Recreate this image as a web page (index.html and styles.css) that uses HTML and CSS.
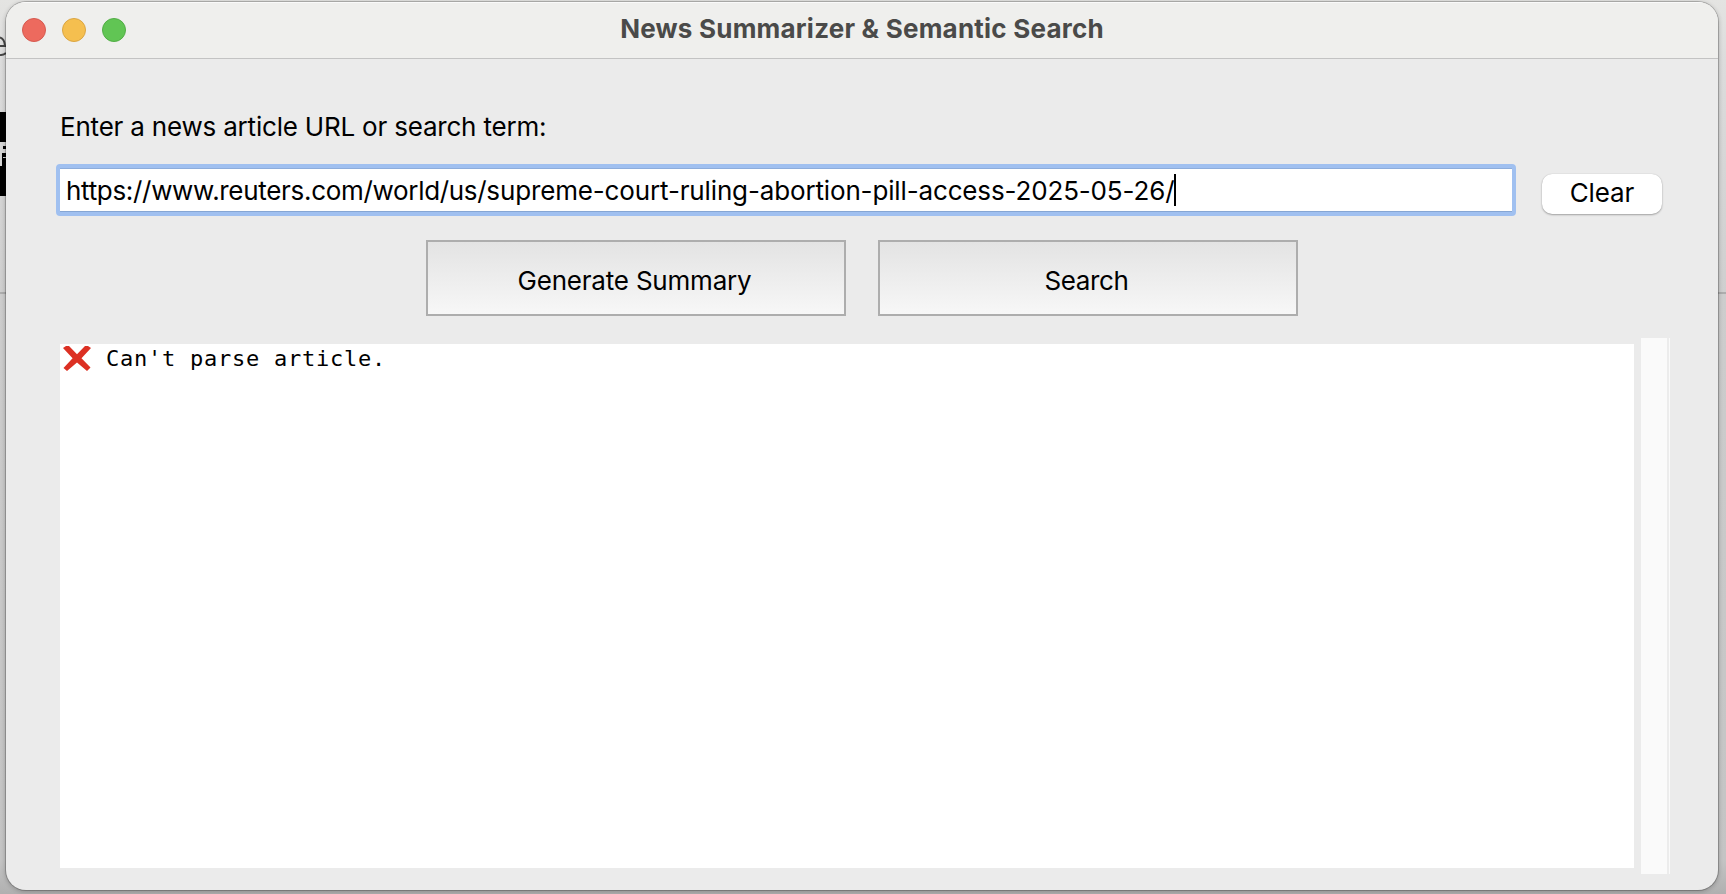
FILE: index.html
```html
<!DOCTYPE html>
<html lang="en">
<head>
<meta charset="utf-8">
<title>News Summarizer &amp; Semantic Search</title>
<link rel="stylesheet" href="styles.css">
</head>
<body>
<div class="desktop">
  <svg class="behind" width="6" height="300" viewBox="0 0 6 300" aria-hidden="true">
    <path d="M0 37.5Q4.6 39 5 46H0M0 55Q3.5 55.5 6 53" fill="none" stroke="#444" stroke-width="2"/>
    <path d="M0 112h6v84H0z" fill="#000"/>
    <path d="M0 142h6v4H3v3h3v4H2v13H0z" fill="#d6d6d6"/>
    <path d="M3 157h3v1H3z" fill="#d6d6d6"/>
  </svg>
  <main class="window">
    <header class="titlebar">
      <div class="lights">
        <span class="light close"></span>
        <span class="light minimize"></span>
        <span class="light expand"></span>
      </div>
      <h1 class="title"><span>News Summarizer &amp; Semantic Search</span></h1>
    </header>
    <section class="content">
      <div class="label"><span>Enter a news article URL or search term:</span></div>
      <div class="entry-row">
        <div class="entry"><span class="url"><span class="host">https://www.reuters.com/world/us/</span>supreme-court-ruling-abortion-pill-access-2025-05-26/</span><i class="caret"></i></div>
        <button class="clear"><span>Clear</span></button>
      </div>
      <div class="actions">
        <button class="action"><span class="generate">Generate Summary</span></button>
        <button class="action"><span class="search">Search</span></button>
      </div>
      <div class="result-row">
        <div class="result">
          <svg class="cross" width="28" height="25" viewBox="0 0 28 25" aria-hidden="true"><path d="M0 2L3 0h3l8 8.2L22 0h3l3 2-9.5 10.3L27.5 21.5 24 25 14 16.4 4 25 .5 22l9.1-9.7z" fill="#dc3023"/></svg>
          <span class="message">Can't parse article.</span>
        </div>
        <div class="scrollbar"></div>
      </div>
    </section>
  </main>
</div>
</body>
</html>
```
FILE: styles.css
```css
* { box-sizing: border-box; }
body { margin: 0; font-family: Inter, "Liberation Sans", sans-serif; color: #000; }
.desktop {
  position: relative;
  width: 1726px;
  height: 894px;
  padding: 2px 8px 4px 6px;
  overflow: hidden;
  background: linear-gradient(#e4e4e2 0, #dcdcdc 60px, #cfcfcf 292px, #adadad 292px, #adadad 294px, #cdcdcd 294px, #c4c4c4 860px, #b0b0b0 894px);
}
.behind { position: absolute; left: 0; top: 0; }
.window {
  position: relative;
  height: 888px;
  border-radius: 20px;
  background: #ebebeb;
  box-shadow: 0 0 0 1px rgba(0,0,0,.2), 0 1px 4px 1px rgba(0,0,0,.2);
  overflow: hidden;
}
.titlebar {
  display: grid;
  grid-template-columns: 160px 1fr 160px;
  height: 57px;
  background: #efefed;
  border-top: 1px solid #fafafa;
  border-bottom: 1px solid #c3c3c3;
}
.lights { display: flex; gap: 16px; padding: 15px 0 0 16px; }
.light { width: 24px; height: 24px; border-radius: 50%; border: 1px solid; }
.close { background: #ed6a5e; border-color: #d55a50; }
.minimize { background: #f5bf4f; border-color: #daa543; }
.expand { background: #61c554; border-color: #52ad46; }
.title { margin: 0; padding-top: 10px; font-size: 26px; line-height: 32px; font-weight: 700; letter-spacing: .22px; color: #4a4a49; text-align: center; white-space: nowrap; }
.content { padding: 52px 48px 0 50px; font-size: 26px; line-height: 32px; letter-spacing: -.2px; white-space: nowrap; }
.label { height: 32px; padding-left: 4px; }
.entry-row { display: flex; align-items: flex-start; gap: 26px; margin-top: 21px; }
.entry {
  display: flex;
  align-items: center;
  width: 1460px;
  height: 52px;
  padding-left: 6px;
  border: 4px solid #a0c0f0;
  border-radius: 4px;
  background: #fff;
  box-shadow: inset 0 -1px #86a6d4, inset 0 1px #8eaddb;
}
.url { padding-top: 2px; letter-spacing: -.145px; }
.host { letter-spacing: -.31px; }
.caret { width: 2px; height: 32px; background: #000; }
button { padding: 0; font: inherit; color: inherit; letter-spacing: inherit; }
.clear {
  width: 120px;
  height: 40px;
  margin-top: 10px;
  padding-bottom: 2px;
  border: 0;
  border-radius: 10px;
  background: #fff;
  box-shadow: 0 1px 2px rgba(0,0,0,.3), 0 0 1px rgba(0,0,0,.2);
  letter-spacing: -.1px;
}
.actions { display: flex; gap: 32px; margin: 24px 0 0 370px; }
.action {
  width: 420px;
  height: 76px;
  padding: 6px 3px 0 0;
  border: 2px solid #adadad;
  background: linear-gradient(#e3e3e3, #f7f7f7);
}
.search { letter-spacing: -.4px; }
.result-row { display: flex; gap: 7px; align-items: flex-start; margin: 22px 0 0 4px; }
.result { display: flex; align-items: flex-start; width: 1574px; height: 524px; margin-top: 6px; padding: 2px 3px; background: #fff; }
.message { margin-left: 15px; padding-top: 1px; font: 22px/24px "DejaVu Sans Mono", monospace; letter-spacing: .755px; }
.scrollbar { width: 29px; height: 536px; background: #fafafa; box-shadow: inset -1px 0 #fafafa, inset -3px 0 #ececec; }
```
